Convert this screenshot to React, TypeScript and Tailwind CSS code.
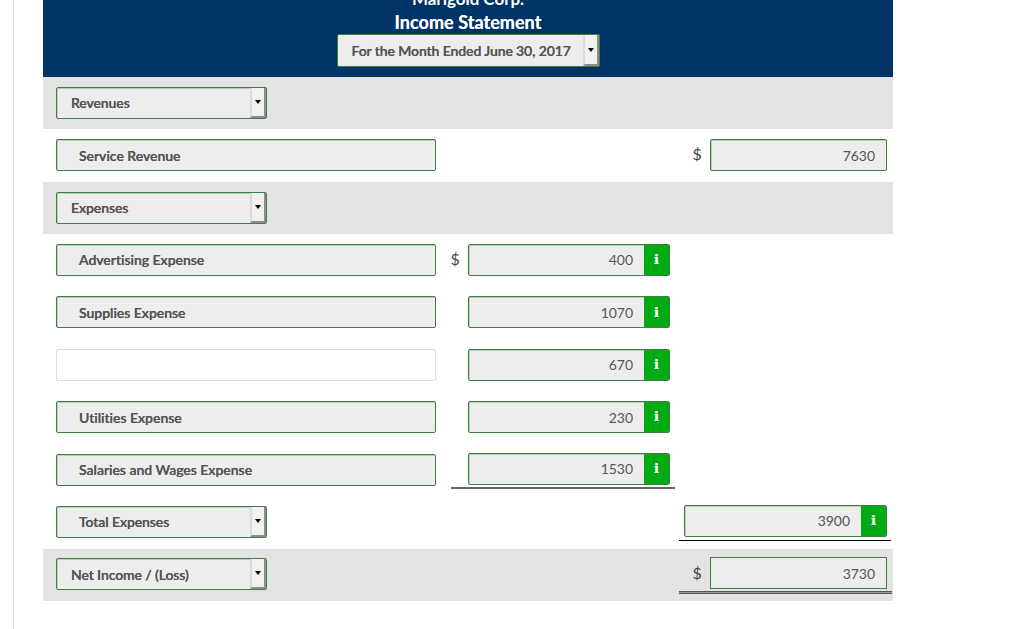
import React from 'react';

const Arrow: React.FC = () => (
  <div className="flex h-full w-[16px] shrink-0 items-center justify-center border-l-2 border-[#dcdcdc] border-r-2 border-b-2 border-r-[#8c8c8c] border-b-[#8c8c8c] bg-[#f1f1f1]">
    <div className="h-0 w-0 border-x-[3px] border-t-[4px] border-x-transparent border-t-black" />
  </div>
);

const Select: React.FC<{ label: string; indent?: boolean }> = ({ label, indent }) => (
  <div className="flex h-[32px] w-[211px] items-center rounded-[2px] border border-[#3f7f3f] bg-[#ededed] shadow-[inset_1px_1px_0_#b9cfb9]">
    <span className={`flex-1 font-semibold tracking-[-0.1px] [text-shadow:0_0_0.5px_#555] ${indent ? 'pl-[22px]' : 'pl-[14px]'}`}>{label}</span>
    <Arrow />
  </div>
);

const Label: React.FC<{ text?: string }> = ({ text }) =>
  text ? (
    <div className="flex h-[32px] w-[380px] items-center rounded-[2px] border border-[#3f7f3f] bg-[#ededed] pl-[22px] font-semibold shadow-[inset_1px_1px_0_#b9cfb9] [text-shadow:0_0_0.5px_#555]">
      {text}
    </div>
  ) : (
    <div className="h-[32px] w-[380px] rounded-[2px] border border-[#dddddd] bg-white" />
  );

const Amount: React.FC<{ value: string; info?: boolean; width: string; square?: boolean }> = ({ value, info, width, square }) => (
  <div className={`flex h-[32px] items-stretch overflow-hidden border border-[#3f7f3f] bg-[#ededed] ${width} ${square ? '' : 'rounded-[2px] shadow-[inset_1px_1px_0_#b9cfb9]'}`}>
    <div className="flex flex-1 items-center justify-end pr-[11px] text-[#555]">{value}</div>
    {info && (
      <div className="flex w-[25px] items-center justify-center bg-[#00ab13] font-['DejaVu_Serif',serif] text-[13px] font-bold text-white [text-shadow:0_0_0.5px_#fff]">
        i
      </div>
    )}
  </div>
);

const Dollar: React.FC<{ className: string }> = ({ className }) => (
  <div className={`text-center text-[16px] leading-[30px] text-[#444] ${className}`}>$</div>
);

const Row: React.FC<{ grey?: boolean; children: React.ReactNode }> = ({ grey, children }) => (
  <div className={`grid h-[52.4px] grid-cols-[380px_32px_202px_40px_177px] items-start pl-[13px] pt-[9.8px] ${grey ? 'bg-[#e3e3e3]' : ''}`}>
    {children}
  </div>
);

const expenses = [
  { label: 'Advertising Expense', value: '400', dollar: true },
  { label: 'Supplies Expense', value: '1070' },
  { label: '', value: '670' },
  { label: 'Utilities Expense', value: '230' },
  { label: 'Salaries and Wages Expense', value: '1530', line: true },
];

const App: React.FC = () => {
  return (
    <div className="h-[629px] overflow-hidden bg-white font-['Lato',sans-serif] text-[14px] tracking-[-0.03px] text-[#555]">
      <div className="ml-[13px] h-full border-l border-[#dddddd] pl-[29px]">
        <div className="w-[850px]">
          <div className="flex h-[77px] flex-col items-center justify-end overflow-hidden bg-[#003366] pb-[10px] text-white">
            <div className="shrink-0 text-[17px] font-bold leading-[22px]">Marigold Corp.</div>
            <div className="shrink-0 text-[18px] font-bold leading-[24px] tracking-[0.05px] [text-shadow:0_0_0.6px_#fff]">Income Statement</div>
            <div className="flex h-[33px] w-[263px] shrink-0 items-center rounded-[2px] border border-[#3f7f3f] bg-[#ededed] tracking-[-0.1px] text-[#555]">
              <span className="flex-1 whitespace-nowrap pl-[14px] font-semibold [text-shadow:0_0_0.5px_#555]">For the Month Ended June 30, 2017</span>
              <Arrow />
            </div>
          </div>

          <Row grey>
            <Select label="Revenues" />
          </Row>
          <Row>
            <Label text="Service Revenue" />
            <div />
            <div />
            <Dollar className="pl-[14px]" />
            <Amount value="7630" width="w-[177px]" />
          </Row>
          <Row grey>
            <Select label="Expenses" />
          </Row>

          {expenses.map((e) => (
            <Row key={e.value}>
              <Label text={e.label} />
              {e.dollar ? <Dollar className="pl-[6px]" /> : <div />}
              <div className={`relative ${e.line ? '-mt-px' : ''}`}>
                <Amount value={e.value} info width="w-[202px]" />
                {e.line && <div className="absolute -left-[17px] top-[34px] h-[2px] w-[224px] bg-[#666]" />}
              </div>
            </Row>
          ))}

          <Row>
            <Select label="Total Expenses" indent />
            <div />
            <div />
            <div className="relative col-span-2 -mt-px justify-self-end">
              <Amount value="3900" info width="w-[203px]" />
              <div className="absolute -left-[5px] top-[35px] h-px w-[212px] bg-black" />
            </div>
          </Row>
          <Row grey>
            <Select label="Net Income / (Loss)" />
            <div />
            <div />
            <Dollar className="pl-[14px]" />
            <div className="relative -mt-px">
              <Amount value="3730" width="w-[177px]" square />
              <div className="absolute -left-[31px] top-[34px] h-[3px] w-[213px] border-y border-[#555] bg-[#999]" />
            </div>
          </Row>
        </div>
      </div>
    </div>
  );
};

export default App;
